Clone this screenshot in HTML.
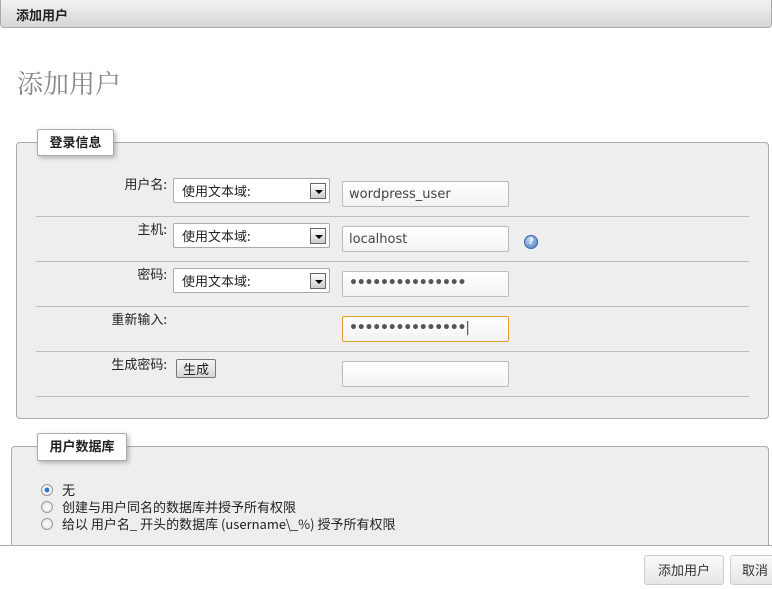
<!DOCTYPE html>
<html><head><meta charset="utf-8"><style>
*{box-sizing:border-box;margin:0;padding:0}
body{width:772px;height:584px;overflow:hidden;background:#fff;position:relative;font-family:"DejaVu Sans","Noto Sans CJK SC",sans-serif;font-size:12px;color:#222}
.a{position:absolute}
.top{left:0;top:0;width:772px;height:28px;background:linear-gradient(#f2f2f2,#d6d6d6);border:1px solid #aaa;border-top:none;border-radius:0 0 4px 4px;font-weight:bold;font-size:13px;padding:5px 0 0 15px;font-family:"Noto Sans CJK SC",sans-serif}
h1{position:absolute;left:17px;top:64px;font-size:26px;font-weight:normal;color:#888;font-family:"Noto Serif CJK SC","Noto Sans CJK SC",serif}
.fs{background:#eee;border:1px solid #aaa;border-radius:4px}
.lg{background:#fff;border:1px solid #aaa;border-radius:2px;box-shadow:2px 2px 5px rgba(0,0,0,.25);font-weight:bold;font-family:"Noto Sans CJK SC",sans-serif;font-size:13px;text-align:center;line-height:24px}
.hr{left:36px;width:713px;height:1px;background:#bbb}
.lab{width:130px;text-align:right;font-size:13px;font-family:"Noto Sans CJK SC",sans-serif}
.sel{left:173px;width:157px;height:25px;background:#fff;border:1px solid #aaa;border-radius:2px;padding:2px 0 0 8px;font-size:13px;font-family:"Noto Sans CJK SC",sans-serif}
.sel i{position:absolute;right:3px;top:4px;width:16px;height:16px;border:1px solid #666;background:linear-gradient(#fff,#ccc)}
.sel i:after{content:"";position:absolute;left:4px;top:6px;border-left:4px solid transparent;border-right:4px solid transparent;border-top:4px solid #000}
.in{left:342px;width:167px;height:26px;background:linear-gradient(#fff,#f3f3f3);border:1px solid #bbb;border-radius:2px;padding:5px 0 0 6px;font-size:13px;color:#444}
.dots{font-size:14px;font-weight:bold;padding-top:3px;letter-spacing:-1.2px;color:#555}
.r{left:41px;width:12px;height:12px;border-radius:50%;border:1px solid #999;background:radial-gradient(#fff,#ddd)}
.rt{left:62px;font-family:"Noto Sans CJK SC",sans-serif;font-size:13px;line-height:16px}
.btn{height:30px;border:1px solid #ccc;border-radius:3px;background:linear-gradient(#fafafa,#e6e6e6);font-family:"Noto Sans CJK SC",sans-serif;font-size:13px;color:#333;text-align:center;line-height:28px}
</style></head><body>
<div class="a top">添加用户</div>
<h1>添加用户</h1>
<div class="a fs" style="left:16px;top:142px;width:753px;height:277px"></div>
<div class="a lg" style="left:37px;top:129px;width:77px;height:27px">登录信息</div>
<div class="a lab" style="left:37px;top:174px">用户名:</div>
<div class="a sel" style="top:178px">使用文本域:<i></i></div>
<div class="a in" style="top:181px">wordpress_user</div>
<div class="a hr" style="top:216px"></div>
<div class="a lab" style="left:37px;top:219px">主机:</div>
<div class="a sel" style="top:223px">使用文本域:<i></i></div>
<div class="a in" style="top:226px">localhost</div>
<div class="a" style="left:524px;top:235px;width:14px;height:14px;border-radius:50%;background:radial-gradient(circle at 40% 35%,#bcd4f2,#4a78c0);border:1px solid #3a62a8;color:#fff;font-size:9px;font-weight:bold;text-align:center;line-height:12px">?</div>
<div class="a hr" style="top:261px"></div>
<div class="a lab" style="left:37px;top:264px">密码:</div>
<div class="a sel" style="top:268px">使用文本域:<i></i></div>
<div class="a in dots" style="top:271px">•••••••••••••••</div>
<div class="a hr" style="top:306px"></div>
<div class="a lab" style="left:37px;top:309px">重新输入:</div>
<div class="a in dots" style="top:316px;border-color:#e0a030">•••••••••••••••<span style="font-weight:normal">|</span></div>
<div class="a hr" style="top:351px"></div>
<div class="a lab" style="left:37px;top:354px">生成密码:</div>
<div class="a" style="left:176px;top:359px;width:40px;height:19px;border:1px solid #777;border-radius:2px;background:linear-gradient(#f6f6f6,#d8d8d8);text-align:center;font-family:'Noto Sans CJK SC',sans-serif;font-size:13px;line-height:17px">生成</div>
<div class="a in" style="top:361px"></div>
<div class="a hr" style="top:396px"></div>
<div class="a fs" style="left:11px;top:446px;width:758px;height:120px"></div>
<div class="a lg" style="left:37px;top:433px;width:90px;height:28px">用户数据库</div>
<div class="a r" style="top:484px;background:radial-gradient(#2a7bd0 30%,#fff 40%,#ddd)"></div><div class="a rt" style="top:482px">无</div>
<div class="a r" style="top:501px"></div><div class="a rt" style="top:499px">创建与用户同名的数据库并授予所有权限</div>
<div class="a r" style="top:518px"></div><div class="a rt" style="top:516px">给以 用户名_ 开头的数据库 (username\_%) 授予所有权限</div>
<div class="a" style="left:0;width:772px;height:44px;background:#fff;border-top:1px solid #aaa;top:545px"></div>
<div class="a btn" style="left:644px;top:555px;width:80px">添加用户</div>
<div class="a btn" style="left:730px;top:555px;width:50px">取消</div>
</body></html>
